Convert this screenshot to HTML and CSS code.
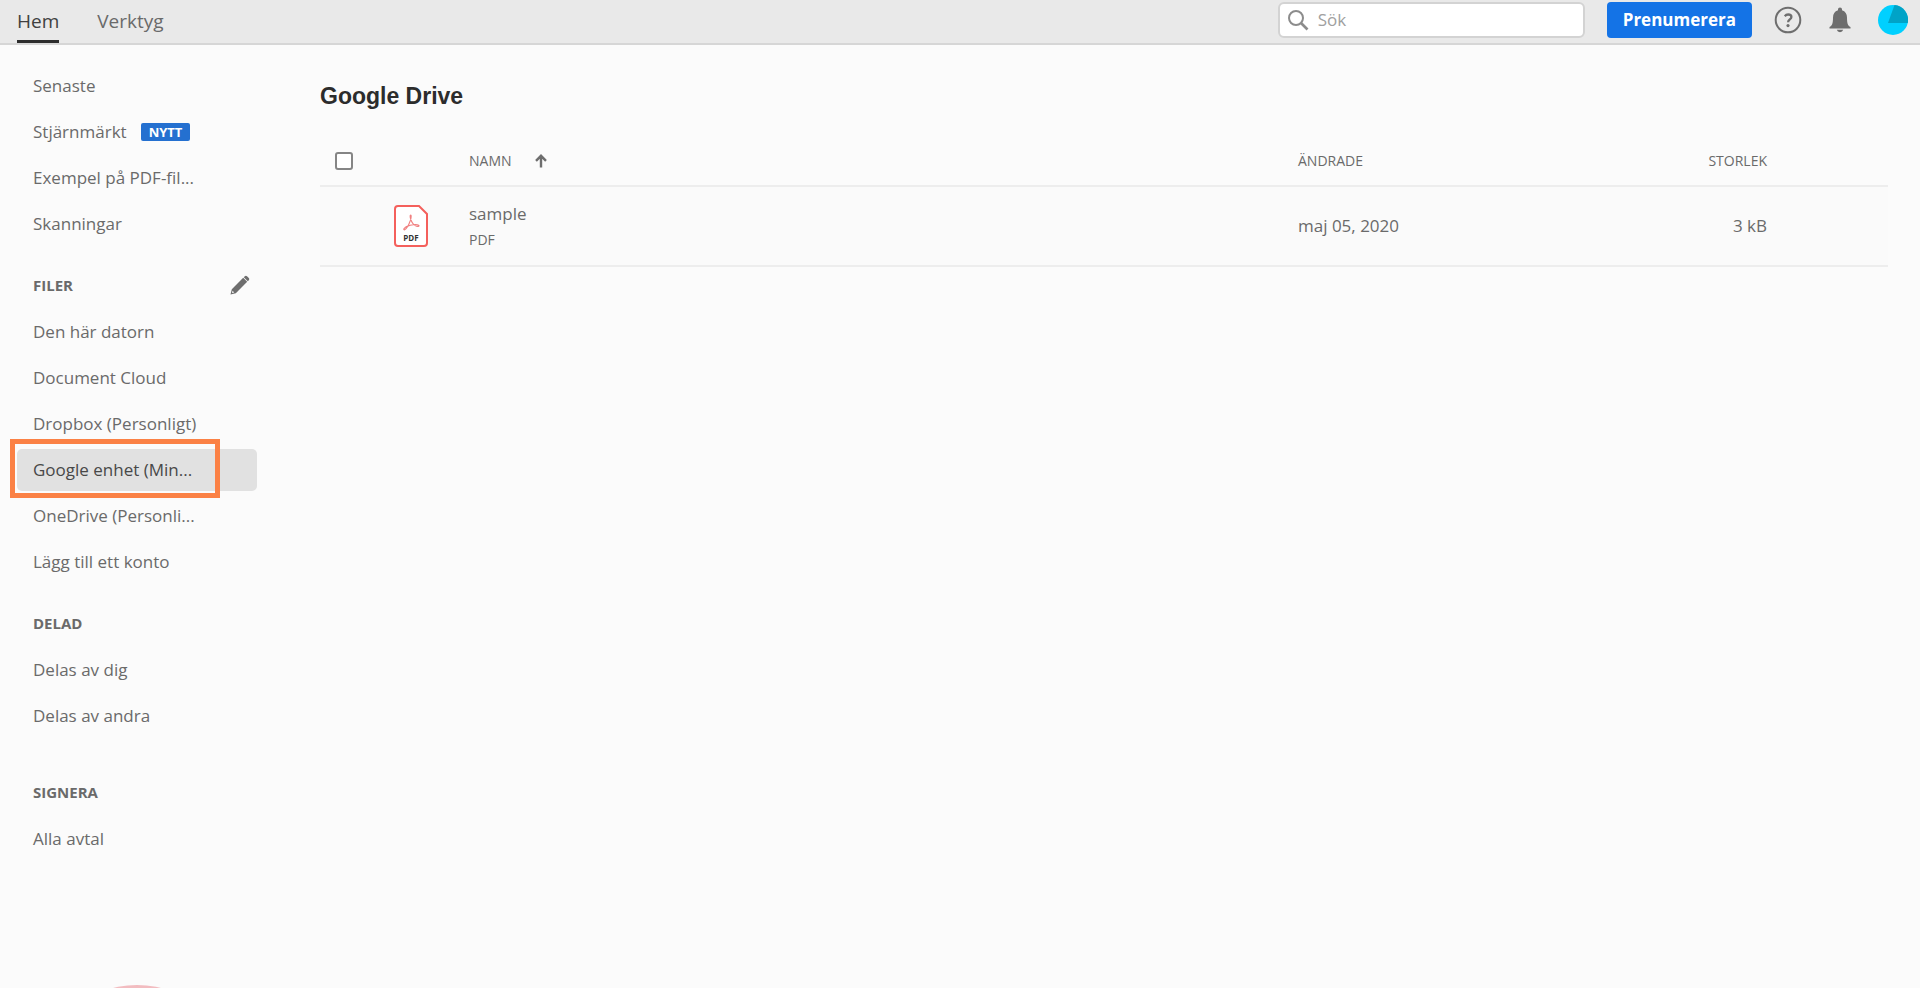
FILE: index.html
```html
<!DOCTYPE html>
<html lang="sv">
<head>
<meta charset="utf-8">
<title>Google Drive</title>
<link rel="stylesheet" href="styles.css">
</head>
<body>
<header class="topbar">
  <nav class="tabs" aria-label="Huvudmeny">
    <a class="tab tab-active" href="#">Hem</a>
    <a class="tab" href="#">Verktyg</a>
  </nav>
  <div class="tools">
    <label class="search">
      <svg width="22" height="22" viewBox="0 0 22 22" fill="none" stroke="#8c8c8c" aria-hidden="true"><circle cx="9" cy="9" r="7" stroke-width="2"/><path d="M14 14l6.500 6.500" stroke-width="2.600"/></svg>
      <input type="text" placeholder="Sök" aria-label="Sök">
    </label>
    <button class="subscribe" type="button">Prenumerera</button>
    <button class="icon-button" type="button" aria-label="Hjälp">
      <svg width="28" height="28" viewBox="0 0 28 28" fill="none" stroke="#6e6e6e"><circle cx="14" cy="14" r="12.300" stroke-width="2"/><path d="M10.800 10.200c1-1.300 2.200-1.700 3.400-1.700 1.900 0 3.200 1 3.200 2.500 0 2.400-3.300 2.500-3.300 5.200" stroke-width="2.300"/><circle cx="14" cy="19.600" r="1.600" fill="#6e6e6e" stroke="none"/></svg>
    </button>
    <button class="icon-button" type="button" aria-label="Aviseringar">
      <svg width="22" height="26" viewBox="0 0 22 26" fill="#6e6e6e"><path d="M9 2.200Q9 .5 11 .5t2 1.700v1C16.400 4.200 18 6.800 18 10.500c0 6 .8 8 3.500 9.600V21.500H.5V20.100C3.200 18.500 4 16.500 4 10.500 4 6.800 5.600 4.200 9 3.200zM7.800 22.800h6.400q-.7 2.400-3.200 2.400t-3.200-2.400z"/></svg>
    </button>
    <button class="icon-button" type="button" aria-label="Konto">
      <svg width="30" height="30" viewBox="0 0 30 30"><circle cx="15" cy="15" r="15" fill="#00d0ff"/><path d="M10 18L16.500 0A15 15 0 0 1 29.800 18z" fill="#00a3c7"/></svg>
    </button>
  </div>
</header>

<div class="layout">
  <nav class="sidebar" aria-label="Platser">
    <a class="item" href="#">Senaste</a>
    <a class="item" href="#">Stjärnmärkt <span class="badge">NYTT</span></a>
    <a class="item" href="#">Exempel på PDF-fil...</a>
    <a class="item" href="#">Skanningar</a>

    <div class="group">
      <h2>FILER</h2>
      <button class="icon-button" type="button" aria-label="Redigera">
        <svg width="20" height="20" viewBox="0 0 20 20"><path fill="#6e6e6e" d="M14.800 1.200Q15.900.1 17 1.200L18.800 3Q19.900 4.100 18.800 5.200L17.800 6.200 13.800 2.200zM13.200 2.800l4 4L5.800 18.200.5 19.500 1.800 14.200zM2.600 15.800l-.7 2.300 2.300-.7z"/></svg>
      </button>
    </div>
    <a class="item" href="#">Den här datorn</a>
    <a class="item" href="#">Document Cloud</a>
    <a class="item" href="#">Dropbox (Personligt)</a>
    <a class="item item-selected" href="#" aria-current="page">Google enhet (Min...</a>
    <a class="item" href="#">OneDrive (Personli...</a>
    <a class="item" href="#">Lägg till ett konto</a>

    <div class="group"><h2>DELAD</h2></div>
    <a class="item" href="#">Delas av dig</a>
    <a class="item" href="#">Delas av andra</a>

    <div class="group group-spaced"><h2>SIGNERA</h2></div>
    <a class="item" href="#">Alla avtal</a>
  </nav>

  <main class="content">
    <h1>Google Drive</h1>
    <table class="files">
      <colgroup><col class="col-check"><col class="col-icon"><col><col class="col-date"><col class="col-size"></colgroup>
      <thead>
        <tr>
          <th class="check"><input type="checkbox" aria-label="Markera alla"></th>
          <th></th>
          <th>NAMN <svg class="sort" width="12" height="14" viewBox="0 0 12 14" fill="none" stroke="#6e6e6e" stroke-width="2.400" aria-hidden="true"><path d="M6 13.500V2M1 6.800L6 1.800l5 5"/></svg></th>
          <th>ÄNDRADE</th>
          <th class="size">STORLEK</th>
        </tr>
      </thead>
      <tbody>
        <tr>
          <td></td>
          <td><svg width="34" height="42" viewBox="0 0 34 42" aria-hidden="true"><path d="M4 1H25L33 9V38Q33 41 30 41H4Q1 41 1 38V4Q1 1 4 1z" fill="#fff" stroke="#f4605c" stroke-width="2"/><path d="M16.600 10c-1.200.3 0 4.500 1.300 7 1.700 3.200 4.700 4.800 6.600 4.300 1.300-.5-.1-1.900-3.300-1.800-3.600.2-7.100 1.200-9.300 2.400-2.400 1.400-2.700 3.300-1.200 2.800 2-1 4.500-5.900 5.700-9.300.8-2.500 1-5.400.2-5.400z" fill="none" stroke="#f08080" stroke-width="1.200"/><text x="17" y="36" text-anchor="middle" class="pdf-label">PDF</text></svg></td>
          <td><span class="name">sample</span><span class="kind">PDF</span></td>
          <td>maj 05, 2020</td>
          <td class="size">3 kB</td>
        </tr>
      </tbody>
    </table>
  </main>
</div>
<div class="click-marker"></div>
</body>
</html>
```
FILE: styles.css
```css
* { box-sizing: border-box; }
body {
  margin: 0;
  min-height: 100vh;
  background: #fbfbfb;
  color: #6a6a6a;
  font: 17px/24px "Open Sans", "Noto Sans", sans-serif;
}
a { color: inherit; text-decoration: none; }
button { font: inherit; border: 0; cursor: pointer; }
svg { display: block; }

.topbar {
  display: flex;
  justify-content: space-between;
  height: 45px;
  padding: 0 12px 0 17px;
  background: #e9e9e9;
  border-bottom: 2px solid #d6d6d6;
}
.tabs { display: flex; gap: 38px; font-size: 19px; }
.tab { padding-top: 9px; border-bottom: 3px solid transparent; }
.tab-active { color: #404040; border-color: #2c2c2c; }
.tools { display: flex; align-items: center; padding-bottom: 3px; }
.search {
  display: flex;
  align-items: center;
  gap: 9px;
  width: 307px;
  height: 36px;
  margin-right: 22px;
  padding: 0 7px;
  background: #fff;
  border: 2px solid #d3d3d3;
  border-radius: 6px;
}
.search input {
  flex: 1;
  min-width: 0;
  padding: 0;
  border: 0;
  outline: 0;
  background: none;
  color: #4b4b4b;
  font: inherit;
}
.search input::placeholder { color: #a0a0a0; opacity: 1; }
.subscribe {
  height: 36px;
  margin-right: 22px;
  padding: 0 16px;
  border-radius: 4px;
  background: #1473e6;
  color: #fff;
  font-weight: 700;
}
.icon-button { padding: 0; background: none; }
.tools .icon-button + .icon-button { margin-left: 27px; }

.layout { display: flex; }
.sidebar { width: 257px; padding: 20px 0 0 17px; }
.item {
  display: flex;
  align-items: center;
  height: 42px;
  margin-bottom: 4px;
  padding-left: 16px;
  border-radius: 5px;
}
.item-selected { position: relative; background: #e1e1e1; color: #484848; }
.item-selected::after {
  content: "";
  position: absolute;
  inset: -10px 37px -7px -7px;
  border: 5px solid #fb8145;
}
.badge {
  margin-left: 14px;
  padding: 0 8px;
  border-radius: 2px;
  background: #2470d0;
  color: #fff;
  font-size: 13px;
  font-weight: 700;
  line-height: 18px;
}
.group {
  display: flex;
  align-items: center;
  justify-content: space-between;
  height: 62px;
  padding: 10px 7px 0 16px;
}
.group-spaced { margin-top: 19px; }
.group h2 { margin: 0; font-size: 15px; font-weight: 700; }

.content { flex: 1; margin: 0 32px 0 63px; padding-top: 36px; }
h1 {
  margin: 0;
  color: #2c2c2c;
  font: 700 23px/30px "Liberation Sans", Arial, sans-serif;
}
.files {
  width: 100%;
  margin-top: 26px;
  border-collapse: collapse;
  table-layout: fixed;
}
.col-check { width: 74px; }
.col-icon { width: 75px; }
.col-date { width: 410px; }
.col-size { width: 180px; }
.files th, .files td { padding: 0; text-align: left; border-bottom: 2px solid #ededed; }
.files th { height: 49px; font-size: 14px; font-weight: 400; }
.files td { height: 80px; background: #fafafa; }
.files th.check { padding-left: 15px; }
.files .size { padding-right: 121px; text-align: right; }
.check input {
  display: block;
  appearance: none;
  width: 18px;
  height: 18px;
  margin: 0;
  border: 2px solid #858585;
  border-radius: 3px;
  background: #fff;
}
.sort { display: inline-block; margin-left: 20px; vertical-align: -2px; }
.name, .kind { display: block; line-height: 26px; }
.name { padding-top: 2px; }
.kind { font-size: 14px; }
.pdf-label { fill: #333; font: 700 8px "Open Sans", sans-serif; }

.click-marker {
  position: fixed;
  left: 40px;
  bottom: -191px;
  width: 194px;
  height: 194px;
  border-radius: 50%;
  background: #f2bcc0;
}
```
